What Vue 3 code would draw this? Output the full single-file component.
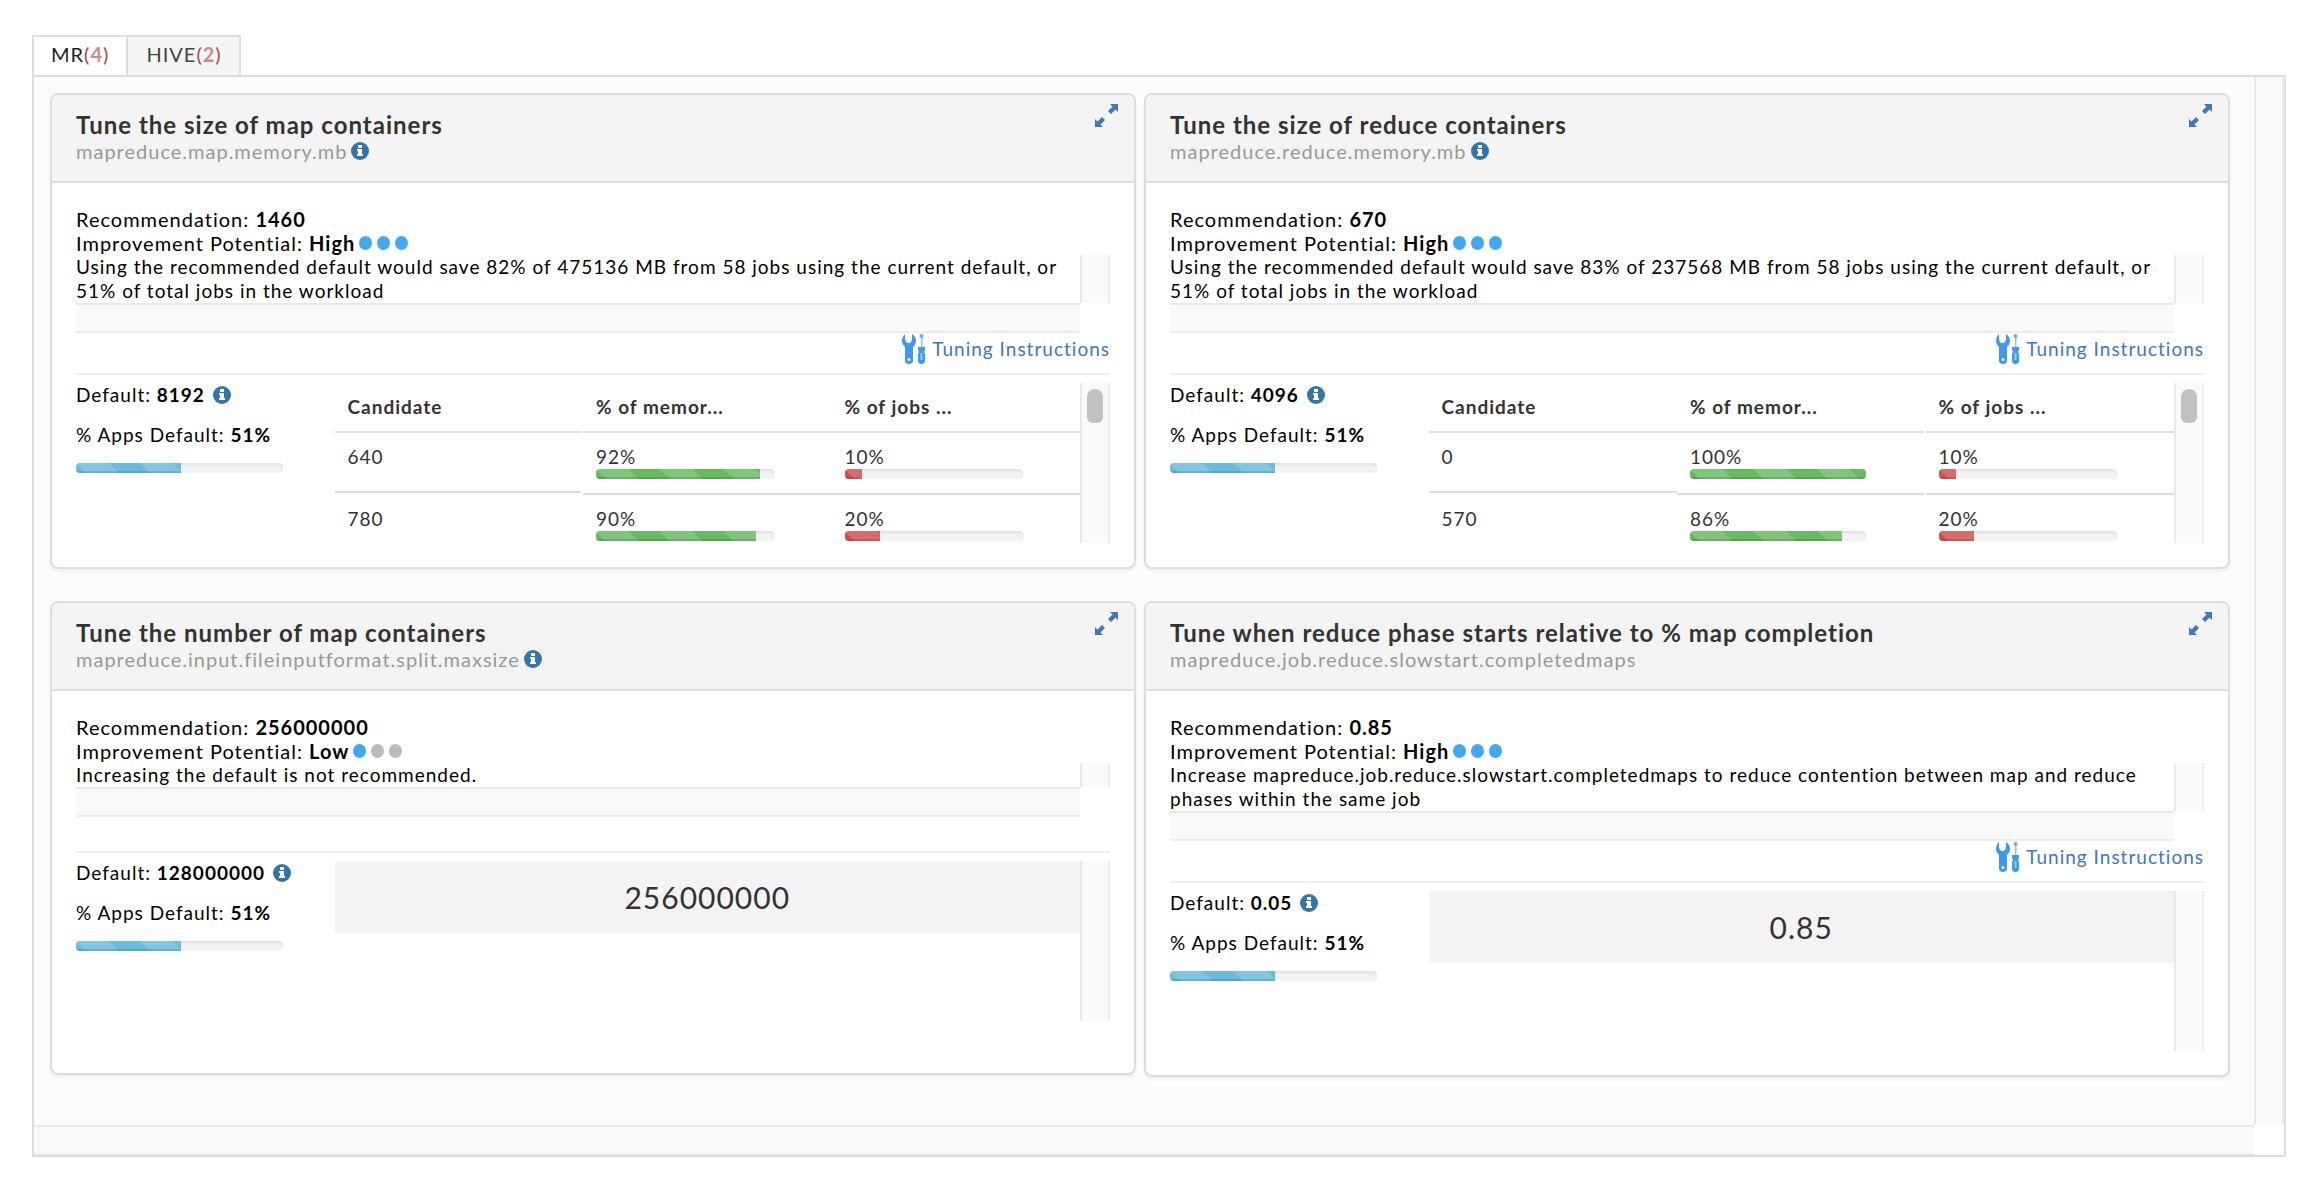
<script setup>
import { ref } from 'vue'

const tabs = [
  { name: 'MR', count: 4 },
  { name: 'HIVE', count: 2 },
]
const active = ref('MR')

const columns = ['Candidate', '% of memor...', '% of jobs ...']

const cards = [
  {
    title: 'Tune the size of map containers',
    property: 'mapreduce.map.memory.mb',
    info: true,
    recommendation: '1460',
    potential: 'High',
    level: 3,
    text: 'Using the recommended default would save 82% of 475136 MB from 58 jobs using the current default, or 51% of total jobs in the workload',
    tuning: true,
    current: '8192',
    currentInfo: true,
    split: 1,
    rows: [
      { candidate: 640, memory: 92, jobs: 10 },
      { candidate: 780, memory: 90, jobs: 20 },
    ],
  },
  {
    title: 'Tune the size of reduce containers',
    property: 'mapreduce.reduce.memory.mb',
    info: true,
    recommendation: '670',
    potential: 'High',
    level: 3,
    text: 'Using the recommended default would save 83% of 237568 MB from 58 jobs using the current default, or 51% of total jobs in the workload',
    tuning: true,
    current: '4096',
    currentInfo: true,
    split: 2,
    rows: [
      { candidate: 0, memory: 100, jobs: 10 },
      { candidate: 570, memory: 86, jobs: 20 },
    ],
  },
  {
    title: 'Tune the number of map containers',
    property: 'mapreduce.input.fileinputformat.split.maxsize',
    info: true,
    recommendation: '256000000',
    potential: 'Low',
    level: 1,
    text: 'Increasing the default is not recommended.',
    tuning: false,
    current: '128000000',
    currentInfo: true,
    value: '256000000',
  },
  {
    title: 'Tune when reduce phase starts relative to % map completion',
    property: 'mapreduce.job.reduce.slowstart.completedmaps',
    info: false,
    recommendation: '0.85',
    potential: 'High',
    level: 3,
    text: 'Increase mapreduce.job.reduce.slowstart.completedmaps to reduce contention between map and reduce phases within the same job',
    tuning: true,
    current: '0.05',
    currentInfo: true,
    value: '0.85',
  },
]
</script>

<template>
  <main class="page">
    <div class="tabs" role="tablist">
      <button
        v-for="tab in tabs"
        :key="tab.name"
        type="button"
        role="tab"
        class="tab"
        :class="{ active: active === tab.name }"
        :aria-selected="active === tab.name"
        @click="active = tab.name"
      >{{ tab.name }}<span class="count">(<b>{{ tab.count }}</b>)</span></button>
    </div>

    <div class="panel">
      <div class="cards">
        <section v-for="card in cards" :key="card.title" class="card">
          <header class="card-head">
            <div>
              <h2>{{ card.title }}</h2>
              <p class="property">
                {{ card.property }}
                <svg v-if="card.info" class="info" viewBox="0 0 18 18" aria-hidden="true">
                  <circle cx="9" cy="9" r="9" />
                  <path d="M7 3h4v3H7zM6 7h5v5h1v2H6v-2h1V9H6z" />
                </svg>
              </p>
            </div>
            <button type="button" class="expand" aria-label="Expand">
              <svg viewBox="0 0 24 24" aria-hidden="true">
                <path d="M15 0h8v8l-2.500-2.500L16 10l-3-3 4.500-4.500zM8 23H0v-8l2.500 2.500L7 13l3 3-4.500 4.500z" />
              </svg>
            </button>
          </header>

          <div class="card-body">
            <div class="summary">
              <p class="line">Recommendation: <b>{{ card.recommendation }}</b></p>
              <p class="line potential">
                <span>Improvement Potential: <b>{{ card.potential }}</b></span>
                <span class="dots">
                  <i v-for="n in 3" :key="n" class="dot" :class="{ on: n <= card.level }"></i>
                </span>
              </p>
            </div>
            <div class="scroller">
              <p>{{ card.text }}</p>
              <div class="track-v"></div>
              <div class="track-h"></div>
            </div>

            <div class="tuning" :class="{ empty: !card.tuning }">
              <a v-if="card.tuning" href="#">
                <svg class="tools" viewBox="0 0 24 30" aria-hidden="true">
                  <path
                    fill-rule="evenodd"
                    d="M3 0v6l2 3h3l2-3V0c3 2 4 4 4 7 0 2-1 4-3 6v14c0 4-8 4-8 0V13C1 11 0 9 0 7c0-3 1-5 3-7zm4 24a1.400 1.400 0 1 0 0 3a1.400 1.400 0 1 0 0-3z"
                  />
                  <circle cx="19.500" cy="2" r="2" opacity=".8" />
                  <path opacity=".6" d="M19 3h1.500v10H19z" />
                  <path d="M16 13h7v3l-1 2v0l1 2v7c0 4-7 4-7 0v-7l1-2-1-2z" />
                  <path class="grip" d="M18.500 19h2v7h-2z" />
                </svg>
                <span>Tuning Instructions</span>
              </a>
            </div>

            <div class="details">
              <div class="current">
                <p class="line">
                  <span>Default: <b>{{ card.current }}</b></span>
                  <svg v-if="card.currentInfo" class="info" viewBox="0 0 18 18" aria-hidden="true">
                    <circle cx="9" cy="9" r="9" />
                    <path d="M7 3h4v3H7zM6 7h5v5h1v2H6v-2h1V9H6z" />
                  </svg>
                </p>
                <p class="line"><span>% Apps Default: <b>51%</b></span></p>
                <div class="progress" role="progressbar" aria-valuenow="51" aria-label="Apps on default">
                  <div class="bar blue" style="width: 51%"></div>
                </div>
              </div>

              <div class="result">
                <div class="result-main">
                  <table v-if="card.rows" :class="'split-' + card.split">
                    <thead>
                      <tr>
                        <th v-for="col in columns" :key="col" scope="col"><div class="cell">{{ col }}</div></th>
                      </tr>
                    </thead>
                    <tbody>
                      <tr v-for="row in card.rows" :key="row.candidate">
                        <td><div class="cell">{{ row.candidate }}</div></td>
                        <td>
                          <div class="cell">
                            {{ row.memory }}%
                            <div class="progress" role="progressbar" :aria-valuenow="row.memory" aria-label="Memory">
                              <div class="bar green" :style="{ width: row.memory + '%' }"></div>
                            </div>
                          </div>
                        </td>
                        <td>
                          <div class="cell">
                            {{ row.jobs }}%
                            <div class="progress" role="progressbar" :aria-valuenow="row.jobs" aria-label="Jobs">
                              <div class="bar red" :style="{ width: row.jobs + '%' }"></div>
                            </div>
                          </div>
                        </td>
                      </tr>
                    </tbody>
                  </table>
                  <div v-else class="value">{{ card.value }}</div>
                </div>
                <div class="track-v"><div v-if="card.rows" class="thumb"></div></div>
              </div>
            </div>
          </div>
        </section>
      </div>
      <div class="track-v"></div>
      <div class="track-h"></div>
    </div>
  </main>
</template>

<style>
body {
  background: #fff;
}
</style>

<style scoped>
* {
  box-sizing: border-box;
}

.page {
  padding: 35px 34px 40px 32px;
  font-family: Lato, "Open Sans", sans-serif;
  font-size: 19px;
  line-height: 24px;
  letter-spacing: 1px;
  color: #000;
}

p,
h2 {
  margin: 0;
}

button {
  font: inherit;
  letter-spacing: inherit;
  cursor: pointer;
}

.tabs {
  display: flex;
}

.tab {
  height: 40px;
  padding: 0 17px 4px;
  border: 2px solid #ddd;
  border-bottom: 0;
  background: #f5f5f5;
  color: #444;
  font-size: 20px;
}

.tab + .tab {
  border-left: 0;
  padding-left: 18px;
}

.tab.active {
  background: #fff;
  color: #222;
}

.count {
  color: #a94450;
}

.count b {
  color: #c98a8c;
}

.panel {
  display: grid;
  grid-template-columns: minmax(0, 1fr) 30px;
  border: 2px solid #ddd;
}

.cards {
  display: grid;
  grid-template-columns: repeat(2, minmax(0, 1fr));
  align-items: start;
  gap: 32px 8px;
  padding: 16px 24px 48px 16px;
  background: #fcfcfc;
}

.track-v {
  border-left: 2px solid #e8e8e8;
  border-right: 2px solid #ededed;
  background: #fafafa;
}

.track-h {
  height: 30px;
  border-top: 2px solid #e8e8e8;
  border-bottom: 2px solid #ededed;
  background: #fafafa;
}

.card {
  min-height: 474px;
  border: 2px solid #ddd;
  border-radius: 8px;
  background: #fff;
  box-shadow: 0 2px 3px rgba(0, 0, 0, 0.06);
  overflow: hidden;
}

.card-head {
  display: flex;
  justify-content: space-between;
  align-items: flex-start;
  height: 88px;
  padding: 9px 15px 0 24px;
  border-bottom: 2px solid #ddd;
  background: #f4f4f4;
}

h2 {
  margin-top: 7px;
  font-size: 24px;
  line-height: 28px;
  color: #333;
}

.property {
  display: flex;
  align-items: center;
  gap: 4px;
  font-size: 20px;
  color: #999;
}

.info {
  width: 18px;
  height: 18px;
  fill: #3276a9;
}

.info path {
  fill: #fff;
}

.expand {
  display: flex;
  padding: 0;
  border: 0;
  background: none;
}

.expand svg {
  width: 24px;
  height: 24px;
  fill: #4078b8;
}

.card-body {
  padding: 24px;
}

.summary {
  font-size: 20px;
}

.line {
  white-space: nowrap;
}

.potential {
  display: flex;
  align-items: center;
  gap: 4px;
}

.dots {
  display: flex;
  gap: 5px;
}

.dot {
  width: 13px;
  height: 14px;
  border-radius: 50%;
  background: #bbb;
}

.dot.on {
  background: #42a9ee;
}

.scroller {
  display: grid;
  grid-template-columns: minmax(0, 1fr) 30px;
}

.tuning {
  display: flex;
  justify-content: flex-end;
  height: 42px;
  border-bottom: 2px solid #eee;
}

.tuning.empty {
  height: 36px;
}

.tuning a {
  display: flex;
  align-items: center;
  gap: 6px;
  height: 32px;
  color: #4078b8;
  text-decoration: none;
}

.tools {
  width: 24px;
  height: 30px;
  fill: #3d98f0;
}

.grip {
  fill: #9ccbf8;
}

.details {
  display: grid;
  grid-template-columns: minmax(0, 1fr) minmax(0, 3fr);
  padding-top: 8px;
}

.current .line {
  display: flex;
  align-items: center;
  gap: 8px;
  margin-bottom: 16px;
}

.progress {
  width: 80%;
  height: 10px;
  border-radius: 4px;
  background: #f3f3f3;
  box-shadow: inset 0 2px 3px rgba(0, 0, 0, 0.08);
  overflow: hidden;
}

.bar {
  height: 10px;
  background-image: repeating-linear-gradient(45deg, transparent 0 7px, rgba(255, 255, 255, 0.16) 7px 30px, transparent 30px 45px);
  box-shadow: inset 0 -2px 0 rgba(0, 0, 0, 0.13);
}

.blue {
  background-color: #69bcdb;
}

.green {
  background-color: #66bb5f;
}

.red {
  background-color: #d05050;
}

.result {
  display: grid;
  grid-template-columns: minmax(0, 1fr) 30px;
  height: 160px;
}

.result-main {
  height: 160px;
  overflow: hidden;
}

table {
  width: 100%;
  table-layout: fixed;
  border-collapse: collapse;
  color: #333;
}

th,
td {
  padding: 0;
  text-align: left;
  vertical-align: top;
}

.cell {
  padding: 12px 13px 0;
  border-bottom: 2px solid #ddd;
}

th .cell {
  height: 50px;
}

td .cell {
  height: 62px;
}

td:first-child .cell {
  height: 60px;
}

.split-1 td:nth-child(1) .cell,
.split-1 th:nth-child(1) .cell,
.split-2 td:nth-child(2) .cell,
.split-2 th:nth-child(2) .cell {
  margin-right: 2px;
}

.thumb {
  width: 16px;
  height: 34px;
  margin: 6px auto 0;
  border-radius: 8px 8px 6px 6px;
  background: #c1c1c1;
}

.value {
  padding: 18px 0;
  background: #f4f4f4;
  color: #333;
  font-size: 30px;
  line-height: 36px;
  text-align: center;
}
</style>
